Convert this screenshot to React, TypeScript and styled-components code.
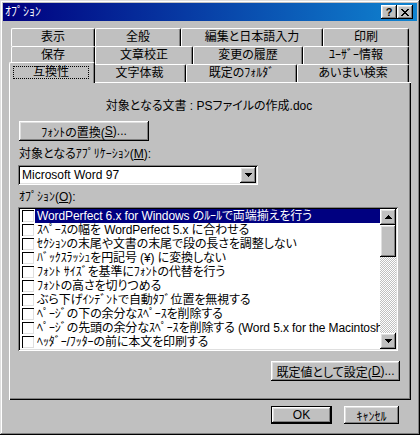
import React from 'react';
import styled, { createGlobalStyle } from 'styled-components';

const FONT = `"Liberation Sans", "Noto Sans CJK JP", sans-serif`;

const GlobalStyle = createGlobalStyle`
  html, body {
    margin: 0;
    padding: 0;
    background: #c0c0c0;
    overflow: hidden;
  }
  body {
    font-family: ${FONT};
    font-size: 12px;
    font-feature-settings: "palt";
    color: #000;
  }
`;

const raised = `box-shadow: inset -1px -1px #000, inset 1px 1px #fff, inset -2px -2px #808080, inset 2px 2px #dfdfdf;`;
const sunken = `box-shadow: inset 1px 1px #808080, inset -1px -1px #fff, inset 2px 2px #000, inset -2px -2px #dfdfdf;`;

const Window = styled.div`
  width: 420px;
  height: 435px;
  box-sizing: border-box;
  padding: 3px;
  background: #c0c0c0;
  box-shadow: inset -1px -1px #000, inset 1px 1px #dfdfdf, inset -2px -2px #808080, inset 2px 2px #fff;
  display: flex;
  flex-direction: column;
`;

const TitleBar = styled.div`
  height: 18px;
  flex: none;
  display: flex;
  align-items: center;
  padding: 0 4px 0 2px;
  background: linear-gradient(90deg, #000080, #1084d0);
  color: #fff;
`;

const TitleText = styled.span`
  flex: 1;
  line-height: 18px;
  font-size: 12px;
`;

const CaptionButton = styled.div`
  width: 16px;
  height: 14px;
  background: #c0c0c0;
  ${raised}
  display: flex;
  align-items: center;
  justify-content: center;
  font: bold 11px ${FONT};
  line-height: 14px;
  color: #000;
`;

const Body = styled.div`
  flex: 1;
  padding: 7px 6px 0;
  display: flex;
  flex-direction: column;
`;

const TabStrip = styled.div`
  margin: 0 2px;
  display: flex;
  flex-direction: column;
`;

const TabRow = styled.div`
  display: flex;
  height: 18px;
`;

const Tab = styled.div<{ $w: number; $active?: boolean }>`
  box-sizing: border-box;
  width: ${p => (p.$active ? p.$w + 4 : p.$w)}px;
  height: ${p => (p.$active ? 21 : 18)}px;
  margin: ${p => (p.$active ? '-2px -2px 0 -2px' : '0')};
  position: relative;
  z-index: ${p => (p.$active ? 1 : 0)};
  background: #c0c0c0;
  border-top: 1px solid #fff;
  border-left: 1px solid #fff;
  border-right: 1px solid #000;
  border-radius: 2px 2px 0 0;
  box-shadow: inset -1px 0 #808080;
  text-align: center;
  line-height: 17px;
  white-space: nowrap;
`;

const FocusRing = styled.span`
  display: block;
  box-sizing: border-box;
  height: 13px;
  margin: 3px 5px 0 3px;
  border: 1px dotted #000;
  line-height: 11px;
`;

const Panel = styled.div`
  box-sizing: border-box;
  height: 318px;
  padding: 17px 11px 0 9px;
  box-shadow: inset 1px 1px #fff, inset -1px -1px #000, inset -2px -2px #808080;
  display: flex;
  flex-direction: column;
  align-items: flex-start;
`;

const DocLine = styled.div`
  align-self: center;
  line-height: 14px;
  white-space: pre;
`;

const PushButton = styled.div<{ $w: number; $h?: number; $default?: boolean }>`
  box-sizing: border-box;
  flex: none;
  width: ${p => p.$w}px;
  height: ${p => p.$h ?? 20}px;
  background: #c0c0c0;
  ${p =>
    p.$default
      ? 'border: 1px solid #000; ' + raised
      : raised}
  display: flex;
  align-items: center;
  justify-content: center;
  white-space: nowrap;
`;

const FontButton = styled(PushButton)`
  margin: 8px 0 0 1px;
`;

const DefaultButton = styled(PushButton)`
  align-self: flex-end;
  margin-top: 10px;
`;

const Label = styled.div<{ $mt: number }>`
  margin-top: ${p => p.$mt}px;
  padding-left: 1px;
  line-height: 14px;
  white-space: nowrap;
`;

const U = styled.span`
  text-decoration: underline;
`;

const Dropdown = styled.div`
  box-sizing: border-box;
  width: 240px;
  height: 20px;
  margin-top: 4px;
  padding: 2px;
  background: #fff;
  ${sunken}
  display: flex;
  align-items: center;
`;

const DropText = styled.span`
  flex: 1;
  padding-left: 2px;
  line-height: 16px;
`;

const ArrowButton = styled.div<{ $h?: number }>`
  width: 16px;
  height: ${p => p.$h ?? 16}px;
  flex: none;
  box-sizing: border-box;
  background: #c0c0c0;
  ${raised}
  display: flex;
  align-items: center;
  justify-content: center;
`;

const ListBox = styled.div`
  box-sizing: border-box;
  width: 380px;
  height: 144px;
  margin-top: 3px;
  padding: 2px;
  background: #fff;
  ${sunken}
  display: flex;
`;

const Items = styled.div`
  flex: 1;
  min-width: 0;
  display: flex;
  flex-direction: column;
`;

const Item = styled.div`
  height: 14px;
  display: flex;
  align-items: center;
  padding-left: 2px;
`;

const Check = styled.span`
  flex: none;
  width: 12px;
  height: 12px;
  box-sizing: border-box;
  background: #fff;
  box-shadow: inset 1px 1px #000, inset -1px -1px #dfdfdf;
  margin-right: 1px;
`;

const ItemText = styled.span<{ $sel?: boolean }>`
  flex: 1;
  min-width: 0;
  height: 14px;
  line-height: 14px;
  padding-left: 2px;
  overflow: hidden;
  white-space: nowrap;
  letter-spacing: -0.1px;
  background: ${p => (p.$sel ? '#000080' : 'transparent')};
  color: ${p => (p.$sel ? '#fff' : '#000')};
`;

const ScrollBar = styled.div`
  width: 16px;
  flex: none;
  display: flex;
  flex-direction: column;
`;

const Thumb = styled.div`
  height: 32px;
  background: #c0c0c0;
  ${raised}
`;

const Track = styled.div`
  flex: 1;
  background-image: conic-gradient(#fff 25%, #c0c0c0 0 50%, #fff 0 75%, #c0c0c0 0);
  background-size: 2px 2px;
`;

const ButtonRow = styled.div`
  display: flex;
  justify-content: flex-end;
  gap: 12px;
  padding: 6px 12px 0 0;
`;

const CloseGlyph = () => {
  const rows = ['11000011', '01100110', '00111100', '00011000', '00111100', '01100110', '11000011'];
  return (
    <svg width="8" height="7" viewBox="0 0 8 7" shapeRendering="crispEdges">
      {rows.flatMap((r, y) =>
        r.split('').map((c, x) => (c === '1' ? <rect key={`${x}-${y}`} x={x} y={y} width="1" height="1" fill="#000" /> : null))
      )}
    </svg>
  );
};

const Arrow = ({ up }: { up?: boolean }) => (
  <svg width="7" height="4" viewBox="0 0 7 4" shapeRendering="crispEdges">
    <polygon points={up ? '3.5,0 7,4 0,4' : '0,0 7,0 3.5,4'} fill="#000" />
  </svg>
);

const rows: { label: React.ReactNode; w: number; active?: boolean }[][] = [
  [
    { label: '表示', w: 84 },
    { label: '全般', w: 86 },
    { label: '編集と日本語入力', w: 142 },
    { label: '印刷', w: 86 },
  ],
  [
    { label: '保存', w: 84 },
    { label: '文章校正', w: 98 },
    { label: '変更の履歴', w: 110 },
    { label: 'ﾕｰｻﾞｰ情報', w: 106 },
  ],
  [
    { label: '互換性', w: 82, active: true },
    { label: '文字体裁', w: 93 },
    { label: '既定のﾌｫﾙﾀﾞ', w: 111 },
    { label: 'あいまい検索', w: 112 },
  ],
];

const options = [
  'WordPerfect 6.x for Windows のﾙｰﾙで両端揃えを行う',
  'ｽﾍﾟｰｽの幅を WordPerfect 5.x に合わせる',
  'ｾｸｼｮﾝの末尾や文書の末尾で段の長さを調整しない',
  'ﾊﾞｯｸｽﾗｯｼｭを円記号 (¥) に変換しない',
  'ﾌｫﾝﾄ ｻｲｽﾞを基準にﾌｫﾝﾄの代替を行う',
  'ﾌｫﾝﾄの高さを切りつめる',
  'ぶら下げｲﾝﾃﾞﾝﾄで自動ﾀﾌﾞ位置を無視する',
  'ﾍﾟｰｼﾞの下の余分なｽﾍﾟｰｽを削除する',
  'ﾍﾟｰｼﾞの先頭の余分なｽﾍﾟｰｽを削除する (Word 5.x for the Macintosh)',
  'ﾍｯﾀﾞｰ/ﾌｯﾀｰの前に本文を印刷する',
];

const App: React.FC = () => (
  <>
    <GlobalStyle />
    <Window>
      <TitleBar>
        <TitleText>ｵﾌﾟｼｮﾝ</TitleText>
        <CaptionButton>?</CaptionButton>
        <CaptionButton>
          <CloseGlyph />
        </CaptionButton>
      </TitleBar>
      <Body>
        <TabStrip>
          {rows.map((row, i) => (
            <TabRow key={i}>
              {row.map(t => (
                <Tab key={String(t.label)} $w={t.w} $active={t.active}>
                  {t.active ? <FocusRing>{t.label}</FocusRing> : t.label}
                </Tab>
              ))}
            </TabRow>
          ))}
        </TabStrip>
        <Panel>
          <DocLine>対象となる文書 : PSファイルの作成.doc</DocLine>
          <FontButton $w={130}>
            ﾌｫﾝﾄの置換(<U>S</U>)...
          </FontButton>
          <Label $mt={6}>
            対象となるｱﾌﾟﾘｹｰｼｮﾝ(<U>M</U>):
          </Label>
          <Dropdown>
            <DropText>Microsoft Word 97</DropText>
            <ArrowButton>
              <Arrow />
            </ArrowButton>
          </Dropdown>
          <Label $mt={5}>
            ｵﾌﾟｼｮﾝ(<U>O</U>):
          </Label>
          <ListBox>
            <Items>
              {options.map((o, i) => (
                <Item key={o}>
                  <Check />
                  <ItemText $sel={i === 0}>{o}</ItemText>
                </Item>
              ))}
            </Items>
            <ScrollBar>
              <ArrowButton>
                <Arrow up />
              </ArrowButton>
              <Thumb />
              <Track />
              <ArrowButton>
                <Arrow />
              </ArrowButton>
            </ScrollBar>
          </ListBox>
          <DefaultButton $w={129}>
            既定値として設定(<U>D</U>)...
          </DefaultButton>
        </Panel>
        <ButtonRow>
          <PushButton $w={61} $h={18} $default>
            OK
          </PushButton>
          <PushButton $w={55} $h={18}>
            ｷｬﾝｾﾙ
          </PushButton>
        </ButtonRow>
      </Body>
    </Window>
  </>
);

export default App;
